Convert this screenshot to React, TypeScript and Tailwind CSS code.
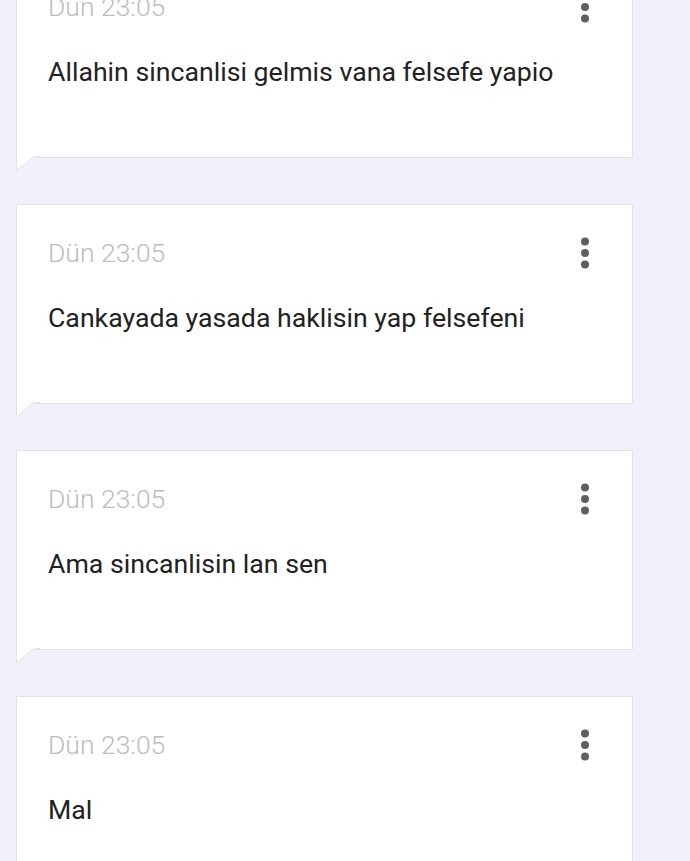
import React from "react";

const messages = [
  "Allahin sincanlisi gelmis vana felsefe yapio",
  "Cankayada yasada haklisin yap felsefeni",
  "Ama sincanlisin lan sen",
  "Mal",
];

function Dots() {
  return (
    <svg width="10" height="34" viewBox="0 0 10 34" className="mr-[11px]">
      <circle cx="5" cy="5.5" r="4" fill="#5f5f5f" />
      <circle cx="5" cy="17" r="4" fill="#5f5f5f" />
      <circle cx="5" cy="28.5" r="4" fill="#5f5f5f" />
    </svg>
  );
}

function Tail() {
  return (
    <svg
      width="24"
      height="18"
      viewBox="0 0 24 18"
      className="absolute left-[-1px] top-[calc(100%-1px)]"
    >
      <path d="M0 0 H20 V1 Q17 1 15 2.5 L1 15 V0 Z" fill="#ffffff" />
      <path
        d="M0.5 0 V15 L15 2.5 Q17 0.5 21 0.5 H24"
        fill="none"
        stroke="#e3e3e3"
        strokeWidth="1"
      />
    </svg>
  );
}

function Card({ text }: { text: string }) {
  return (
    <div className="relative h-[200px] w-[617px] shrink-0 border border-[#e3e3e3] bg-white px-[31px] pt-[31px]">
      <div className="flex h-[34px] items-center justify-between">
        <span className="text-[26.5px] font-light leading-[34px] text-[#bdbdbd]">Dün 23:05</span>
        <Dots />
      </div>
      <div className="mt-[31px] text-[26.7px] leading-[34px] text-[#222222]">{text}</div>
      <Tail />
    </div>
  );
}

export default function App() {
  return (
    <div
      className="h-[861px] w-[690px] overflow-hidden bg-[#f0f1fa]"
      style={{ fontFamily: "Roboto, 'Noto Sans', sans-serif" }}
    >
      <div className="mt-[-42px] flex flex-col gap-[46px] pl-[16px]">
        {messages.map((m, i) => (
          <Card key={i} text={m} />
        ))}
      </div>
    </div>
  );
}
